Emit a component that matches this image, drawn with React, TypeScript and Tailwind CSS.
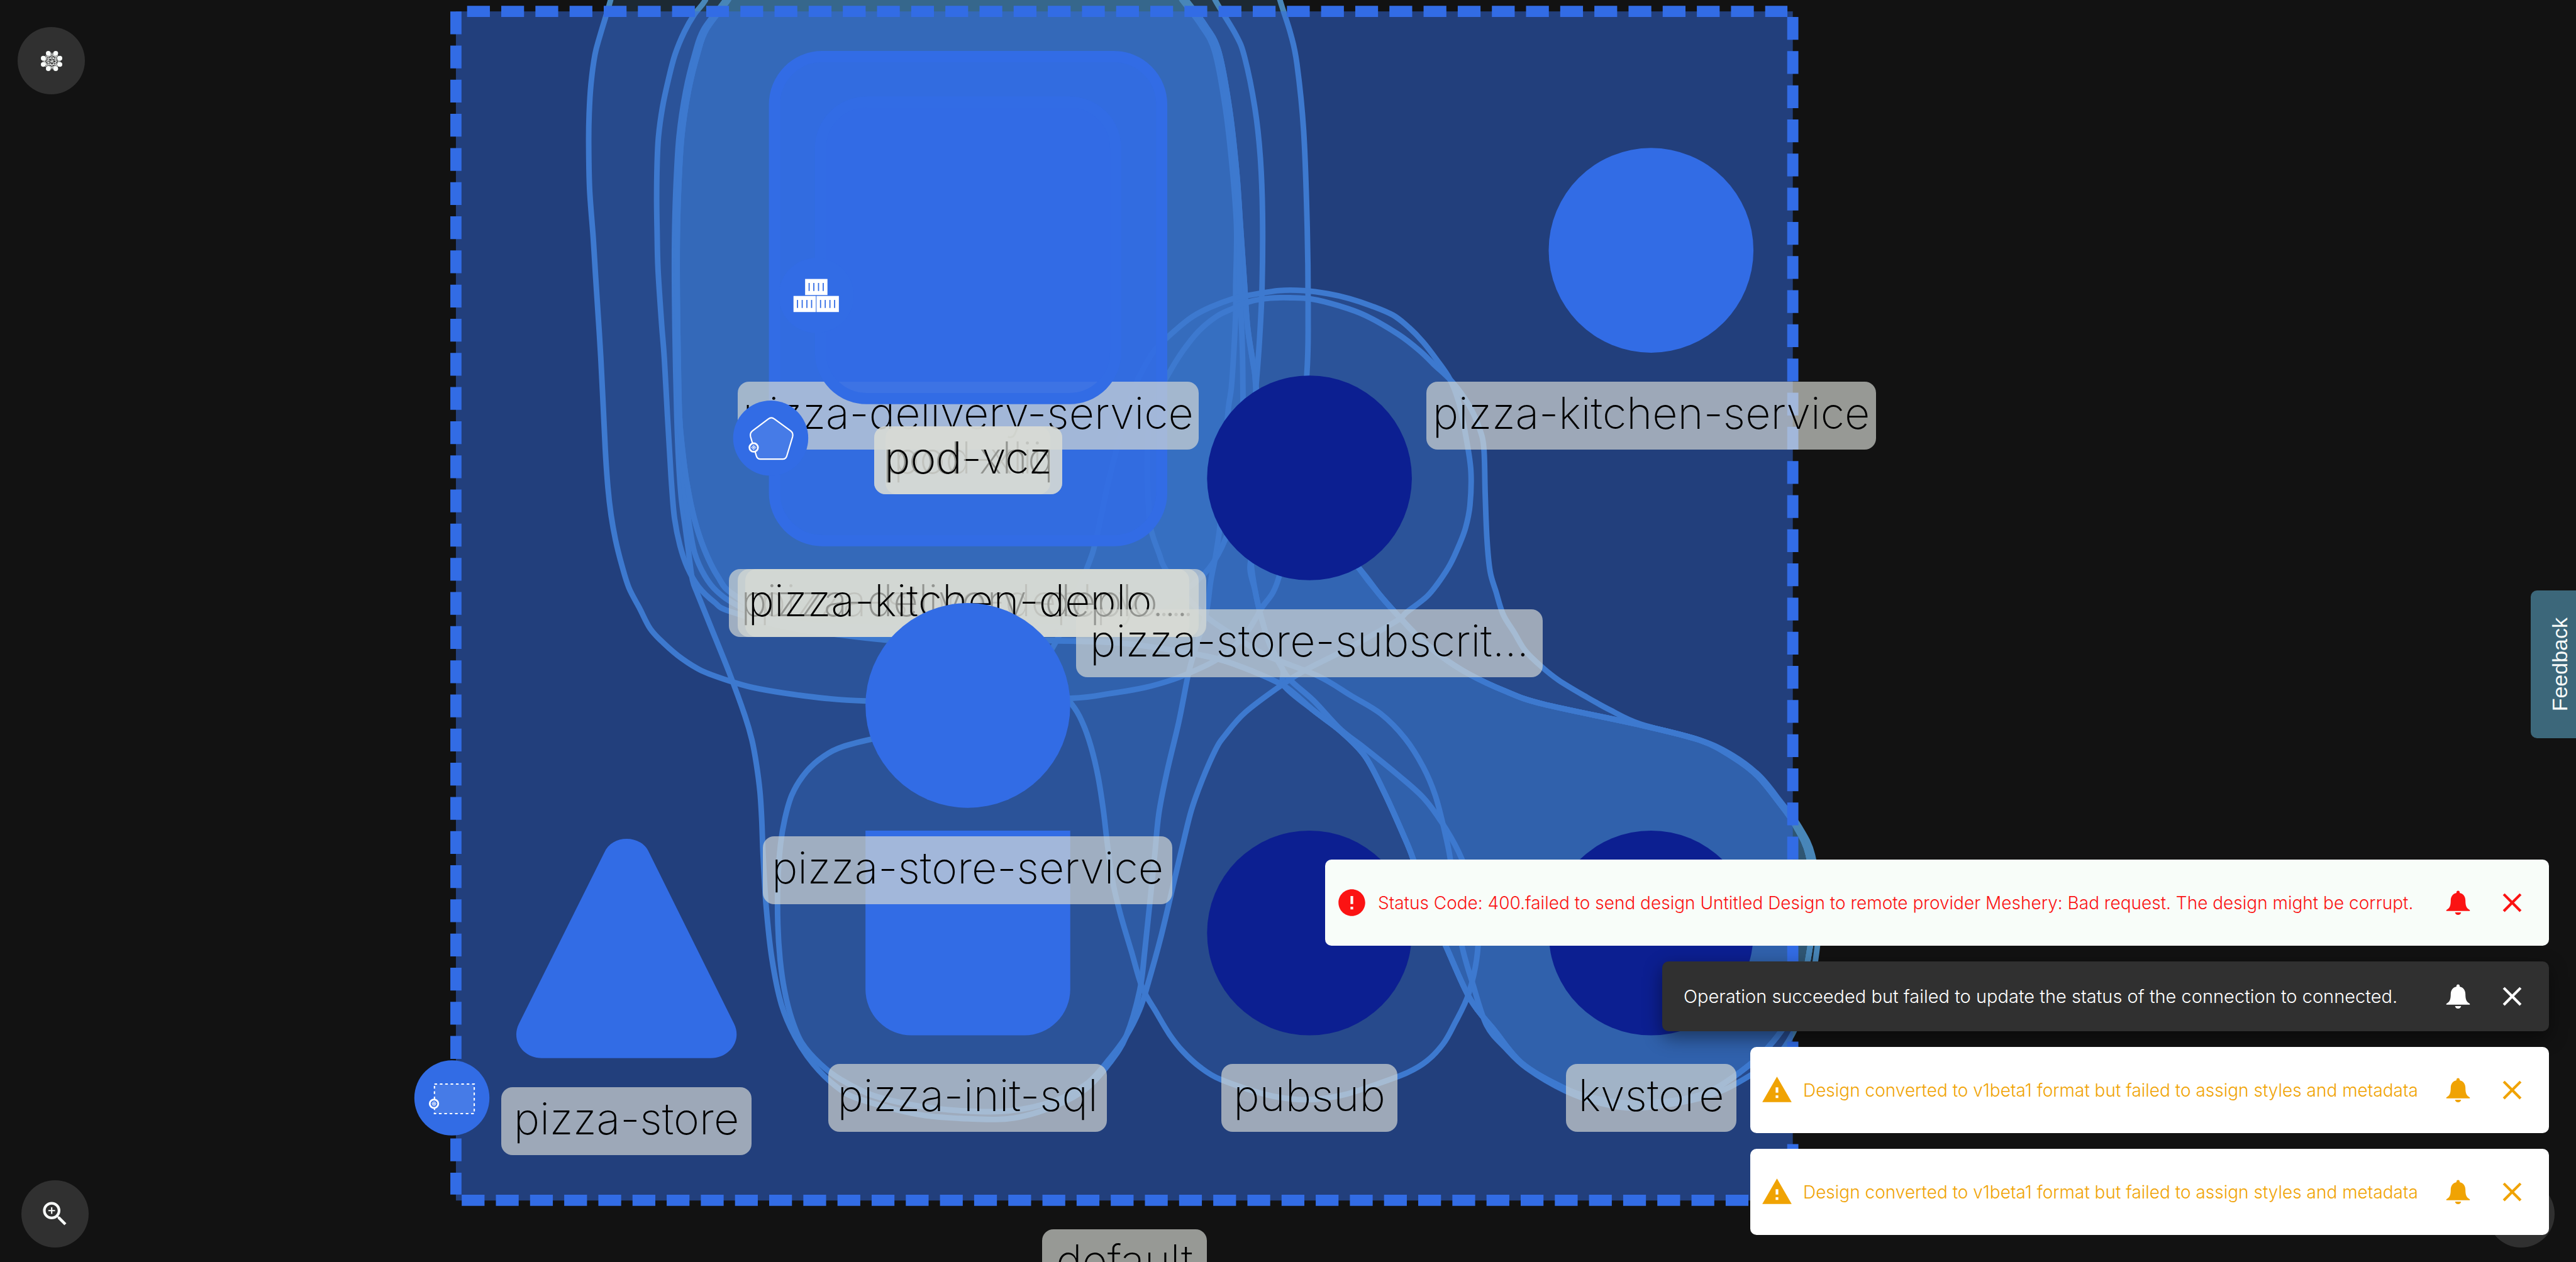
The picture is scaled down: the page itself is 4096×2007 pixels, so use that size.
import React from "react";
import { MdClose, MdError, MdWarning, MdZoomIn } from "react-icons/md";

type Point = [number, number];

/* Closed smooth outline through a list of points. */
function outline(points: Point[]): string {
  const n = points.length;
  const at = (i: number) => points[(i + n) % n];
  let d = `M${points[0][0]} ${points[0][1]}`;
  for (let i = 0; i < n; i++) {
    const [p0, p1, p2, p3] = [at(i - 1), at(i), at(i + 1), at(i + 2)];
    d += `C${p1[0] + (p2[0] - p0[0]) / 6} ${p1[1] + (p2[1] - p0[1]) / 6} ${p2[0] - (p3[0] - p1[0]) / 6} ${p2[1] - (p3[1] - p1[1]) / 6} ${p2[0]} ${p2[1]}`;
  }
  return d + "Z";
}

const innerLeft: Point[] = [
  [1660, -60], [1622, 0], [1573, 66], [1553, 122], [1533, 204], [1518, 306], [1511, 423], [1508, 536], [1508, 663], [1510, 800], [1513, 930],
];
const innerRight: Point[] = [
  [2770, 510], [2761, 383], [2745, 242], [2721, 115], [2691, 57], [2648, 0], [2600, -60],
];
const shift = (pts: Point[], dx: number): Point[] => pts.map(([x, y]) => [x + dx, y]);

const kvLoop: Point[] = [
  [3160, 1922], [3190, 2020], [3233, 2116], [3287, 2234], [3342, 2305], [3405, 2380], [3500, 2435], [3572, 2458], [3669, 2468], [3800, 2450],
  [3890, 2399], [3965, 2330], [4020, 2240], [4048, 2116], [4054, 2020], [4044, 1913], [4014, 1846], [3978, 1795], [3930, 1736], [3875, 1694],
  [3802, 1656], [3669, 1622], [3451, 1575], [3366, 1546], [3285, 1508], [3220, 1466], [3165, 1418], [3129, 1380], [3088, 1334], [3038, 1270],
];
const kvReturn: Point[] = [
  [2950, 1140], [2870, 1000], [2815, 890], [2805, 830], [2790, 735], [2783, 640],
];
const kvEntry: Point[] = [
  [2872, 1535], [2938, 1590], [2997, 1635], [3051, 1690], [3094, 1770], [3136, 1863],
];

const bubbles: Point[][] = [
  [
    [1385, -80], [1365, 0], [1342, 77], [1330, 122], [1321, 189], [1317, 255], [1316, 321], [1318, 423], [1326, 531], [1331, 612], [1343, 800],
    [1353, 1004], [1359, 1091], [1366, 1152], [1376, 1208], [1390, 1264], [1406, 1315], [1430, 1361], [1454, 1407], [1485, 1440], [1524, 1473],
    [1568, 1500], [1630, 1523], [1683, 1538], [1757, 1551], [1844, 1562], [1936, 1568], [2150, 1572], [2395, 1562], [2478, 1552], [2560, 1538],
    [2623, 1520], [2665, 1503], [2723, 1474], [2780, 1425], [2820, 1362], [2860, 1290], [2900, 1080], [2922, 839], [2925, 701], [2923, 510],
    [2915, 293], [2900, 143], [2886, 76], [2862, 0], [2840, -80],
  ],
  [
    [1605, -60], [1577, 0], [1553, 31], [1530, 71], [1509, 122], [1494, 179], [1481, 240], [1472, 306], [1469, 367], [1468, 444], [1469, 520],
    [1471, 602], [1479, 724], [1485, 800], [1492, 928], [1498, 1030], [1502, 1093], [1508, 1160], [1520, 1220], [1537, 1270], [1562, 1313],
    [1597, 1347], [1630, 1367], [1757, 1402], [1961, 1430], [2200, 1450], [2330, 1500], [2397, 1576], [2421, 1618], [2439, 1669], [2455, 1736],
    [2467, 1812], [2476, 1888], [2488, 1972], [2506, 2048], [2530, 2129], [2554, 2209], [2585, 2264], [2615, 2314], [2645, 2352], [2682, 2386],
    [2730, 2415], [2833, 2449], [2918, 2460], [3000, 2450], [3082, 2424], [3148, 2399], [3191, 2373], [3227, 2335], [3251, 2293], [3285, 2220],
    [3305, 2116], [3298, 2010], [3269, 1922], [3233, 1854], [3185, 1787], [3124, 1732], [3051, 1673], [2997, 1631], [2938, 1568], [2889, 1525],
    [2868, 1497], [2839, 1441], [2820, 1380], [2807, 1324], [2797, 1254], [2793, 1150], [2797, 1000], [2808, 870], [2816, 765], [2822, 640],
    [2823, 478], [2818, 351], [2806, 242], [2783, 128], [2763, 77], [2717, 0], [2690, -60],
  ],
  [
    ...innerLeft, [1517, 1030], [1523, 1113], [1532, 1180], [1540, 1240], [1548, 1297], [1560, 1330], [1589, 1402], [1630, 1504],
    [1665, 1600], [1681, 1655], [1691, 1709], [1699, 1771], [1703, 1834], [1706, 1912], [1713, 2029], [1726, 2146], [1747, 2247], [1777, 2318],
    [1818, 2380], [1869, 2430], [1920, 2458], [2053, 2493], [2175, 2503], [2267, 2501], [2359, 2474], [2430, 2434], [2482, 2377], [2518, 2318],
    [2548, 2217], [2560, 2124], [2581, 1922], [2591, 1821], [2609, 1728], [2636, 1614], [2657, 1508], [2673, 1450], [2697, 1372], [2707, 1301],
    [2718, 1244], [2727, 1183], [2735, 1100], [2745, 930], [2753, 870], [2758, 800], [2763, 700], [2763, 640], ...shift(innerRight, -5),
  ],
  [
    ...shift(innerLeft, 3), [1521, 1000], [1527, 1063], [1535, 1130], [1542, 1180], [1553, 1237], [1575, 1287], [1603, 1323], [1650, 1355],
    [1757, 1402], [1961, 1425], [2354, 1433], [2500, 1438], [2632, 1456], [2723, 1474], [2797, 1500],
    ...kvEntry, ...kvLoop, ...kvReturn, ...shift(innerRight, 4),
  ],
  [
    ...shift(innerLeft, 6), [1525, 1000], [1535, 1077], [1552, 1160], [1575, 1230], [1605, 1290], [1640, 1330], [1757, 1395], [1961, 1420],
    [2354, 1433], [2500, 1438], [2632, 1456], [2723, 1474], [2797, 1500],
    ...kvEntry, ...kvLoop, ...kvReturn, ...shift(innerRight, 4),
  ],
  [
    [2868, 1497], ...kvEntry, ...kvLoop, [2950, 1180], [2850, 1180], [2797, 1254], [2807, 1324], [2820, 1380], [2839, 1441],
  ],
  [
    ...shift(innerLeft, 6), [1525, 1000], [1535, 1077], [1552, 1160], [1575, 1230], [1605, 1290], [1640, 1330], [1757, 1390], [2000, 1405],
    [2400, 1400], [2560, 1370], [2650, 1320], [2703, 1272], [2740, 1206], [2765, 1120], [2778, 950], [2779, 850], [2777, 750], [2772, 640],
    ...innerRight,
  ],
  [
    [1951, 1653], [1874, 1674], [1829, 1701], [1795, 1736], [1770, 1779], [1755, 1830], [1745, 1889], [1739, 1974], [1739, 2068], [1744, 2146],
    [1754, 2216], [1770, 2279], [1793, 2333], [1834, 2380], [1880, 2415], [1951, 2450], [2053, 2474], [2155, 2485], [2257, 2485], [2359, 2462],
    [2430, 2424], [2482, 2367], [2518, 2318], [2548, 2259], [2567, 2200], [2597, 2091], [2627, 1964], [2645, 1888], [2664, 1812], [2688, 1745],
    [2718, 1677], [2739, 1645], [2785, 1593], [2869, 1530], [2922, 1497], [3013, 1451], [3121, 1390], [3146, 1369], [3191, 1334], [3220, 1298],
    [3243, 1262], [3262, 1221], [3277, 1181], [3287, 1130], [3289, 1053], [3278, 977], [3262, 900], [3242, 848], [3212, 804], [3182, 765],
    [3151, 733], [3115, 705], [3066, 684], [3018, 668], [2970, 657], [2915, 650], [2860, 650], [2790, 661], [2757, 668], [2707, 687],
    [2667, 708], [2630, 737], [2583, 782], [2557, 824], [2535, 870], [2507, 966], [2478, 1079], [2453, 1196], [2431, 1269], [2354, 1448],
    [2250, 1570], [2100, 1625],
  ],
  [
    [2885, 666], [2933, 669], [2994, 684], [3054, 706], [3127, 748], [3175, 785], [3206, 815], [3248, 855], [3284, 905], [3307, 955],
    [3318, 1002], [3321, 1104], [3325, 1206], [3332, 1278], [3345, 1323], [3361, 1374], [3386, 1415], [3411, 1456], [3448, 1492], [3486, 1522],
    [3544, 1557], [3600, 1588], [3669, 1620], [3802, 1656], [3875, 1690], [3935, 1736], [3983, 1795], [4024, 1850], [4053, 1913], [4066, 2020], [4064, 2116],
    [4040, 2240], [3985, 2350], [3915, 2405], [3815, 2453], [3669, 2478], [3580, 2468], [3500, 2440], [3415, 2390], [3366, 2344], [3324, 2293],
    [3293, 2200], [3269, 2116], [3252, 2010], [3243, 1922], [3229, 1854], [3209, 1778], [3182, 1715], [3142, 1652], [3088, 1597], [3021, 1556],
    [2947, 1512], [2831, 1466], [2764, 1425], [2698, 1380], [2640, 1320], [2603, 1268], [2592, 1239], [2577, 1197], [2570, 1159], [2565, 1041],
    [2570, 947], [2590, 880], [2620, 824], [2647, 782], [2680, 741], [2720, 708], [2757, 690], [2793, 675], [2840, 667],
  ],
];

function Layer({ children }: { children: React.ReactNode }) {
  return (
    <svg aria-hidden="true" viewBox="0 0 5760 2823" className="pointer-events-none absolute left-0 top-0 h-[2007px] w-[4096px]">
      {children}
    </svg>
  );
}

function Label({ at, children }: { at: string; children: React.ReactNode }) {
  return (
    <div className={`absolute flex h-[108px] items-center justify-center whitespace-nowrap rounded-[18px] bg-[#d7dad4]/[.68] pb-2 text-[70px] font-[250] leading-none text-black ${at}`}>
      {children}
    </div>
  );
}

function Wheel({ x, y }: { x: number; y: number }) {
  return (
    <g stroke="#fff" fill="none">
      <circle cx={x} cy={y} r="9.5" fill="#326ce5" strokeWidth="4" />
      <circle cx={x} cy={y} r="4" strokeWidth="1" />
      <path strokeWidth="1" d={`M${x} ${y - 6}v12M${x - 6} ${y}h12M${x - 4} ${y - 4}l8 8M${x + 4} ${y - 4}l-8 8`} />
    </g>
  );
}

function Container({ x, y }: { x: number; y: number }) {
  return (
    <g>
      <rect x={x} y={y} width="50" height="36" fill="#fff" />
      <path d={`M${x + 9} ${y + 9}v18m10.500-18v18m10.500-18v18m10.500-18v18`} stroke="#326ce5" strokeWidth="2.500" />
    </g>
  );
}

function GraphCanvas() {
  return (
    <main aria-label="Design canvas" className="absolute inset-0 overflow-hidden">
      <Layer>
        <g fill="#4886b8" fillOpacity=".2" stroke="none">
          {bubbles.map((b, i) => <path key={i} d={outline(b)} />)}
        </g>
        <g fill="none" stroke="#4886b8" strokeWidth="12.500">
          {bubbles.map((b, i) => <path key={i} d={outline(b)} />)}
        </g>
        <rect x="1019" y="25.500" width="2990" height="2660" fill="#326ce5" fillOpacity=".5" />
        <g stroke="#326ce5" strokeWidth="25" strokeDasharray="51 25.400">
          <path d="M1044 25.500H3997" />
          <path d="M1019 25.500V2672" />
          <path d="M4009 38V2685" />
          <path d="M1032 2685H3997" />
        </g>
        <rect x="1731.500" y="126.500" width="866" height="1083" rx="107" fill="#326ce5" fillOpacity=".88" stroke="#326ce5" strokeWidth="25" />
      </Layer>
      <Label at="left-[1173px] top-[607px] w-[733px]">pizza-delivery-service</Label>
      <Layer>
        <g fill="#326ce5">
          <rect x="1834.500" y="228.500" width="660" height="663" rx="103" fillOpacity=".9" stroke="#326ce5" strokeWidth="25" />
          <circle cx="1825" cy="661" r="84" />
          <circle cx="1723" cy="980" r="84" />
          <circle cx="3692" cy="560" r="229" />
          <path d="M1935 1858H2393V2213a103 103 0 0 1-103 103H2038a103 103 0 0 1-103-103Z" />
          <path d="M1351 1907C1368 1866 1434 1866 1451 1907L1641 2290C1660 2328 1630 2367 1589 2367H1211C1170 2367 1141 2328 1160 2290Z" />
        </g>
        <g fill="#0c1f91">
          <circle cx="2928" cy="1069" r="229" />
          <circle cx="2928" cy="2087" r="229" />
          <circle cx="3692" cy="2087" r="229" />
        </g>
        <Container x={1800} y={624} />
        <Container x={1774} y={662} />
        <Container x={1825.5} y={662} />
        <path
          d="M1718 937q6.500-5 13 0l37 27q6 5 4 13l-13 43q-2 7-9 7h-50q-7 0-9-7l-13-43q-2-8 4-13z"
          fill="#fff" fillOpacity=".1" stroke="#fff" strokeWidth="3"
        />
        <Wheel x={1685} y={1001} />
      </Layer>
      <Label at="left-[1408px] top-[678px] w-[262px]">pod-xlii</Label>
      <Label at="left-[1390px] top-[678px] w-[299px]">pod-xhq</Label>
      <Label at="left-[1390px] top-[678px] w-[299px]">pod-vcz</Label>
      <Label at="left-[1185px] top-[905px] w-[706px]">pizza-store-deploy…</Label>
      <Label at="left-[1159px] top-[905px] w-[759px]">pizza-delivery-deplo…</Label>
      <Label at="left-[1173px] top-[905px] w-[733px]">pizza-kitchen-deplo…</Label>
      <Layer>
        <g fill="#326ce5">
          <circle cx="2164" cy="1578" r="229" />
          <circle cx="1010" cy="2456" r="84" />
        </g>
        <rect x="971" y="2425" width="89" height="66" fill="#fff" fillOpacity=".1" stroke="#fff" strokeWidth="3" strokeDasharray="6 6" />
        <Wheel x={970} y={2469} />
      </Layer>
      <Label at="left-[2268px] top-[607px] w-[715px]">pizza-kitchen-service</Label>
      <Label at="left-[1711px] top-[969px] w-[742px]">pizza-store-subscrit…</Label>
      <Label at="left-[1213px] top-[1330px] w-[651px]">pizza-store-service</Label>
      <Label at="left-[1317px] top-[1692px] w-[443px]">pizza-init-sql</Label>
      <Label at="left-[797px] top-[1729px] w-[398px]">pizza-store</Label>
      <Label at="left-[1942px] top-[1692px] w-[280px]">pubsub</Label>
      <Label at="left-[2490px] top-[1692px] w-[271px]">kvstore</Label>
      <Label at="left-[1657px] top-[1955px] w-[262px]">default</Label>
    </main>
  );
}

const meshDots: Point[] = [[50, 16], [100, 16], [16, 49], [128, 49], [16, 91], [128, 91], [50, 119], [100, 119]];

function MeshIcon() {
  return (
    <svg aria-hidden="true" viewBox="0 0 144 135" className="h-8 w-[34px]" fill="#f8fbf9" stroke="#f8fbf9">
      {meshDots.flatMap((a, i) =>
        meshDots.slice(i + 1).map((b, j) => (
          <path key={`${i}-${j}`} d={`M${a[0]} ${a[1]}L${b[0]} ${b[1]}`} strokeWidth="4" opacity=".9" />
        )),
      )}
      {meshDots.map(([x, y]) => <circle key={`${x}-${y}`} cx={x} cy={y} r="16" stroke="none" />)}
    </svg>
  );
}

function RoundButton({ label, at, children }: { label: string; at: string; children?: React.ReactNode }) {
  return (
    <button type="button" aria-label={label} className={`absolute flex size-[107px] items-center justify-center rounded-full bg-[#303030] text-[#f8fbf9] ${at}`}>
      {children}
    </button>
  );
}

function Bell() {
  return (
    <svg aria-hidden="true" viewBox="0 0 24 24" className="size-[51px]" fill="currentColor">
      <path d="M12 3c-.7 0-1.200.5-1.200 1.200v.5C8 5.300 6.500 7.600 6.500 10.300c0 3.700-.6 5.700-3.300 7.200v.7h17.600v-.7c-2.700-1.500-3.300-3.500-3.300-7.200 0-2.700-1.500-5-4.300-5.600v-.5C13.200 3.500 12.700 3 12 3zM9.700 19.300c.2 1.100 1.100 1.900 2.300 1.900s2.100-.8 2.300-1.900z" />
    </svg>
  );
}

function Toast({ box, icon, children }: { box: string; icon?: React.ReactNode; children: React.ReactNode }) {
  return (
    <div role="alert" className={`flex max-w-full items-center rounded-[10px] pr-[33px] font-[350] leading-10 ${box}`}>
      {icon}
      <p className="grow whitespace-nowrap">{children}</p>
      <button type="button" aria-label="Open notifications" className="mr-[35px] shrink-0"><Bell /></button>
      <button type="button" aria-label="Dismiss" className="shrink-0"><MdClose className="size-[51px]" /></button>
    </div>
  );
}

const errorIcon = <MdError className="mr-4 size-[51px] shrink-0" />;
const warningIcon = <MdWarning className="mr-4 size-[51px] shrink-0" />;

export default function App() {
  return (
    <div className="relative h-screen w-full overflow-hidden bg-[#121212] font-['Inter','Noto_Sans',sans-serif]">
      <GraphCanvas />
      <RoundButton label="Open menu" at="left-[28px] top-[43px]"><MeshIcon /></RoundButton>
      <RoundButton label="Zoom in" at="bottom-[23px] left-[34px]"><MdZoomIn className="size-[51px]" /></RoundButton>
      <RoundButton label="Help" at="bottom-[23px] right-[34px]" />
      <button type="button" className="absolute right-0 top-[939px] flex h-[235px] w-[72px] items-center justify-center rounded-l-[10px] bg-[#3c677a] pl-5 font-['Liberation_Sans',Arial,sans-serif] text-[34px] leading-none text-[#f8fbf9]">
        <span className="rotate-180 [writing-mode:vertical-rl]">Feedback</span>
      </button>
      <section aria-label="Notifications" className="absolute bottom-[43px] right-[43px] flex flex-col items-end gap-[25px]">
        <Toast box="h-[137px] w-[1946px] bg-[#f8fdf9] pl-[17px] text-[28px] text-[#fb1313]" icon={errorIcon}>
          Status Code: 400.failed to send design Untitled Design to remote provider Meshery: Bad request. The design might be corrupt.
        </Toast>
        <Toast box="h-[111px] w-[1410px] bg-[#303030] pl-[34px] text-[29px] text-white shadow-[0_10px_30px_rgba(0,0,0,0.45)]">
          Operation succeeded but failed to update the status of the connection to connected.
        </Toast>
        <Toast box="h-[137px] w-[1270px] bg-white pl-[17px] text-[28px] text-[#f0a303]" icon={warningIcon}>
          Design converted to v1beta1 format but failed to assign styles and metadata
        </Toast>
        <Toast box="h-[137px] w-[1270px] bg-white pl-[17px] text-[28px] text-[#f0a303]" icon={warningIcon}>
          Design converted to v1beta1 format but failed to assign styles and metadata
        </Toast>
      </section>
    </div>
  );
}
